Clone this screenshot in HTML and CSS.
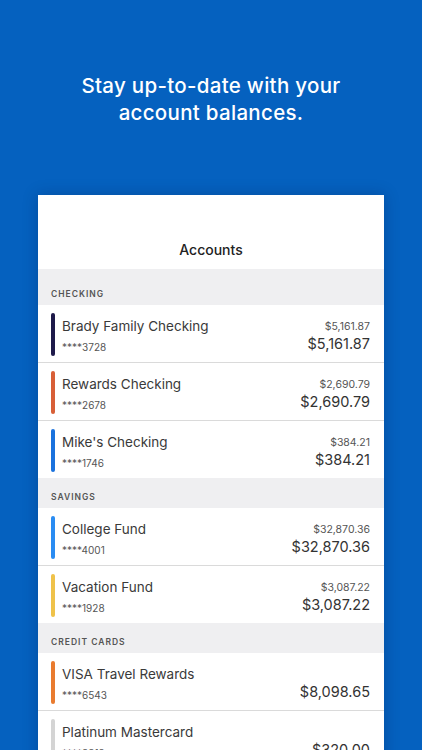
FILE: index.html
```html
<!DOCTYPE html>
<html lang="en">
<head>
    <meta charset="UTF-8">
    <meta name="viewport" content="width=device-width, initial-scale=1.0">
    <title>Accounts</title>
    <link rel="stylesheet" href="styles.css">
</head>
<body>

<h1 class="hero">Stay up-to-date with your<br>account balances.</h1>

<div class="card">
    <div class="card-title">Accounts</div>

    <!-- Checking -->
    <div class="section-head first">CHECKING</div>
    <div class="account">
        <span class="bar navy"></span>
        <div class="info">
            <div class="name">Brady Family Checking</div>
            <div class="number">****3728</div>
        </div>
        <div class="amounts">
            <div class="available">$5,161.87</div>
            <div class="balance">$5,161.87</div>
        </div>
    </div>
    <div class="account">
        <span class="bar rust"></span>
        <div class="info">
            <div class="name">Rewards Checking</div>
            <div class="number">****2678</div>
        </div>
        <div class="amounts">
            <div class="available">$2,690.79</div>
            <div class="balance">$2,690.79</div>
        </div>
    </div>
    <div class="account last">
        <span class="bar blue"></span>
        <div class="info">
            <div class="name">Mike's Checking</div>
            <div class="number">****1746</div>
        </div>
        <div class="amounts">
            <div class="available">$384.21</div>
            <div class="balance">$384.21</div>
        </div>
    </div>

    <!-- Savings -->
    <div class="section-head">SAVINGS</div>
    <div class="account">
        <span class="bar sky"></span>
        <div class="info">
            <div class="name">College Fund</div>
            <div class="number">****4001</div>
        </div>
        <div class="amounts">
            <div class="available">$32,870.36</div>
            <div class="balance">$32,870.36</div>
        </div>
    </div>
    <div class="account last">
        <span class="bar yellow"></span>
        <div class="info">
            <div class="name">Vacation Fund</div>
            <div class="number">****1928</div>
        </div>
        <div class="amounts">
            <div class="available">$3,087.22</div>
            <div class="balance">$3,087.22</div>
        </div>
    </div>

    <!-- Credit cards -->
    <div class="section-head">CREDIT CARDS</div>
    <div class="account">
        <span class="bar orange"></span>
        <div class="info">
            <div class="name">VISA Travel Rewards</div>
            <div class="number">****6543</div>
        </div>
        <div class="amounts">
            <div class="available"></div>
            <div class="balance">$8,098.65</div>
        </div>
    </div>
    <div class="account">
        <span class="bar gray"></span>
        <div class="info">
            <div class="name">Platinum Mastercard</div>
            <div class="number">****8812</div>
        </div>
        <div class="amounts">
            <div class="available"></div>
            <div class="balance">$320.00</div>
        </div>
    </div>
</div>

</body>
</html>
```

FILE: styles.css
```css
body {
    margin: 0;
    background-color: #0561bf;
    font-family: Inter, "Noto Sans", sans-serif;
    overflow: hidden;
}
.hero {
    margin: 0;
    padding: 72px 0 0;
    color: #fff;
    font-size: 20.5px;
    font-weight: 500;
    line-height: 27px;
    text-align: center;
    letter-spacing: 0.3px;
}
.card {
    margin: 69px 38px 0;
    background-color: #fff;
    box-shadow: 0 0 14px rgba(0, 20, 60, 0.25);
}
.card-title {
    height: 74px;
    box-sizing: border-box;
    padding-bottom: 9px;
    display: flex;
    align-items: flex-end;
    justify-content: center;
    font-size: 14px;
    line-height: 20px;
    font-weight: 500;
    color: #222;
}
.section-head {
    background-color: #efeff1;
    padding: 13px 13px 5px;
    font-size: 8.5px;
    line-height: 12px;
    font-weight: 600;
    letter-spacing: 1px;
    color: #555;
}
.section-head.first {
    padding-top: 19px;
}
.account {
    display: flex;
    align-items: flex-start;
    padding: 8px 14px 6px 13px;
    border-bottom: 1px solid #dadada;
}
.account.last {
    border-bottom: 0;
}
.bar {
    width: 4px;
    height: 43px;
    border-radius: 2px;
    flex-shrink: 0;
}
.bar.navy { background-color: #1e1a4a; }
.bar.rust { background-color: #d85f37; }
.bar.blue { background-color: #1a72dd; }
.bar.sky { background-color: #2a8cf2; }
.bar.yellow { background-color: #efc24a; }
.bar.orange { background-color: #e97b2f; }
.bar.gray { background-color: #d4d4d4; }
.info {
    flex: 1;
    margin-left: 7px;
    padding-top: 4px;
}
.name {
    font-size: 13.5px;
    line-height: 18px;
    color: #3a3a3a;
}
.number {
    margin-top: 5px;
    font-size: 10px;
    line-height: 14px;
    color: #555;
}
.amounts {
    text-align: right;
    padding-top: 7px;
}
.available {
    height: 14px;
    font-size: 10.5px;
    line-height: 14px;
    color: #555;
}
.balance {
    font-size: 14.5px;
    line-height: 20px;
    color: #333;
}
```
